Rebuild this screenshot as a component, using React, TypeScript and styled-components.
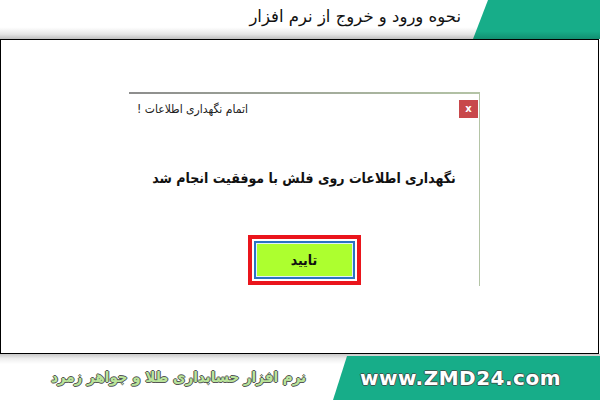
import styled, { createGlobalStyle } from "styled-components"

const GlobalStyle = createGlobalStyle`
  html, body {
    margin: 0;
    padding: 0;
    background: #ffffff;
  }
  * {
    box-sizing: border-box;
  }
`

const green = "#17ad89"
const font = `"DejaVu Sans", sans-serif`

export default function App() {
  return (
    <>
      <GlobalStyle />
      <Page>
        <Header>
          <HeaderTitle dir="rtl">نحوه ورود و خروج از نرم افزار</HeaderTitle>
          <GreenTab />
        </Header>

        <Panel>
          <Dialog>
            <TitleBar>
              <DialogTitle dir="rtl">اتمام نگهداری اطلاعات !</DialogTitle>
              <CloseBT type="button">x</CloseBT>
            </TitleBar>
            <Message dir="rtl">نگهداری اطلاعات روی فلش با موفقیت انجام شد</Message>
            <OkBT type="button">تایید</OkBT>
          </Dialog>
        </Panel>

        <Footer>
          <Slogan dir="rtl">نرم افزار حسابداری طلا و جواهر زمرد</Slogan>
          <SiteTab>
            <SiteName>www.ZMD24.com</SiteName>
          </SiteTab>
        </Footer>
      </Page>
    </>
  )
}

//style

const Page = styled.div`
  display: flex;
  flex-direction: column;
  width: 600px;
  height: 400px;
  overflow: hidden;
  font-family: ${font};
`

const Header = styled.div`
  display: flex;
  align-items: stretch;
  justify-content: flex-end;
  height: 39px;
  background: linear-gradient(to bottom, #ffffff 0%, #ffffff 70%, #e4e4e4 88%, #bdbdbd 100%);
`

const HeaderTitle = styled.div`
  display: flex;
  align-items: center;
  padding: 0 12px 6px 0;
  font-size: 16.5px;
  color: #111;
`

const GreenTab = styled.div`
  width: 127px;
  background: linear-gradient(to bottom, ${green} 0%, ${green} 80%, #128f71 100%);
  clip-path: polygon(15px 0, 100% 0, 100% 100%, 0 100%);
`

const Panel = styled.div`
  height: 315px;
  margin-right: 1px;
  padding: 52px 0 0 128px;
  border: 1.5px solid #000;
  background: #fff;
`

const Dialog = styled.div`
  display: flex;
  flex-direction: column;
  align-items: center;
  width: 351px;
  height: 194px;
  border-top: 2px solid #9aa69a;
  border-right: 1.5px solid #9fae98;
  border-image: linear-gradient(to right, #8d8d8d, #b4c4a6) 1;
  border-left: 0;
  border-bottom: 0;
`

const TitleBar = styled.div`
  display: flex;
  align-items: center;
  justify-content: space-between;
  align-self: stretch;
  height: 28px;
  padding: 1px 1px 0 8px;
`

const DialogTitle = styled.div`
  font-size: 12px;
  font-stretch: condensed;
  color: #222;
`

const CloseBT = styled.button`
  width: 19px;
  height: 18px;
  padding: 0;
  border: 0;
  background: #c8484b;
  color: #fff;
  font-family: ${font};
  font-size: 10px;
  font-weight: bold;
  line-height: 16px;
`

const Message = styled.div`
  margin-top: 48px;
  white-space: nowrap;
  font-size: 14px;
  font-stretch: condensed;
  font-weight: bold;
  color: #111;
`

const OkBT = styled.button`
  width: 113px;
  height: 50px;
  margin-top: 49px;
  border: 4px solid #ea151c;
  background: #adff2f;
  box-shadow: inset 0 0 0 2px #fff, inset 0 0 0 4px #2a72c4, inset 0 0 0 5px #dff0ff;
  font-family: ${font};
  font-size: 14px;
  font-stretch: condensed;
  font-weight: bold;
  color: #111;
`

const Footer = styled.div`
  display: flex;
  align-items: stretch;
  flex: 1;
  background: linear-gradient(to bottom, #c8c8c8 0%, #eeeeee 10%, #ffffff 22%);
`

const Slogan = styled.div`
  display: flex;
  align-items: center;
  justify-content: center;
  flex: 1;
  padding: 0 0 0 24px;
  font-size: 15px;
  font-stretch: condensed;
  font-weight: bold;
  color: #b9e49b;
  text-shadow: -1px 0 #555, 1px 0 #555, 0 -1px #555, 0 1px #555;
`

const SiteTab = styled.div`
  display: flex;
  align-items: center;
  justify-content: center;
  width: 267px;
  margin-top: 2px;
  padding-right: 12px;
  background: ${green};
  clip-path: polygon(14px 0, 100% 0, 100% 100%, 0 100%);
`

const SiteName = styled.div`
  font-family: ${font};
  font-size: 20px;
  font-weight: bold;
  letter-spacing: 0.5px;
  color: #fff;
  text-shadow: -1px 0 #3a5a50, 1px 0 #3a5a50, 0 -1px #3a5a50, 0 1px #3a5a50;
`
